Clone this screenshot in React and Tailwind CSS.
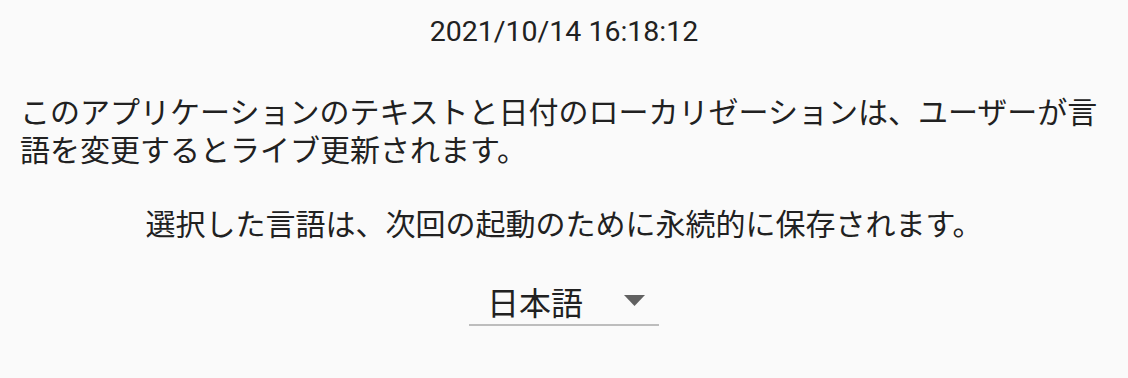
import React from 'react';

const font = { fontFamily: '"Noto Sans CJK JP", Roboto, sans-serif' };

const LanguageDropdown = () => (
	<div className="flex items-center w-[190px] h-[48px] pl-[18px] pr-[14px] border-b-2 border-[#bdbdbd]">
		<span className="flex-1 text-[32px] leading-[40px] text-[#212121]">日本語</span>
		<svg width="21" height="11" viewBox="0 0 21 11" className="mb-[2px]">
			<polygon points="0,0 21,0 10.5,11" fill="#616161" />
		</svg>
	</div>
);

const App = () => {
	return (
		<div className="w-full h-[378px] bg-[#fafafa] text-[#212121] overflow-hidden" style={font}>
			<div className="flex flex-col items-center pt-[12px]">
				<p className="text-[28.5px] leading-[40px] font-[Roboto] text-center">2021/10/14 16:18:12</p>
				<p className="self-stretch px-[20px] mt-[39px] text-[30px] leading-[38px] text-left">
					このアプリケーションのテキストと日付のローカリゼーションは、ユーザーが言語を変更するとライブ更新されます。
				</p>
				<p className="mt-[36px] text-[30px] leading-[38px] text-center">
					選択した言語は、次回の起動のために永続的に保存されます。
				</p>
				<div className="mt-[37px]">
					<LanguageDropdown />
				</div>
			</div>
		</div>
	);
};

export default App;
